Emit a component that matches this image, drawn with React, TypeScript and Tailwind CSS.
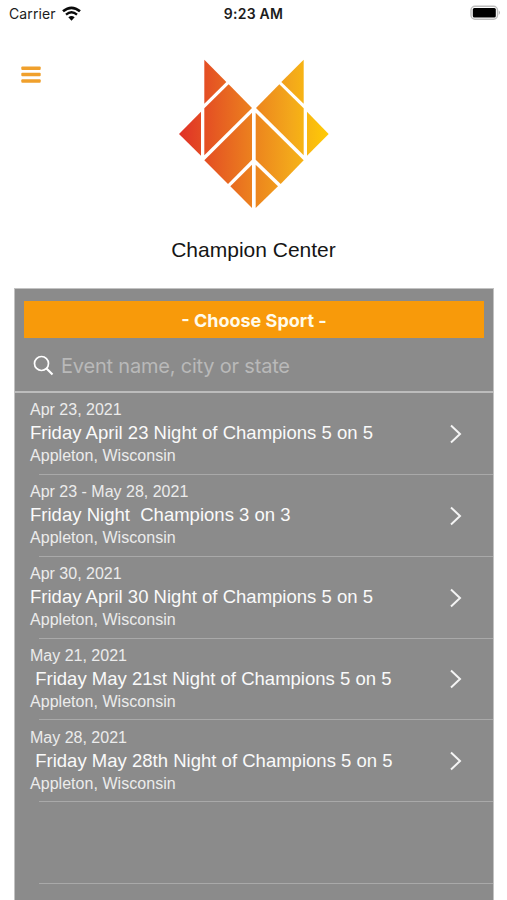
const events = [
  { date: "Apr 23, 2021", name: "Friday April 23 Night of Champions 5 on 5", place: "Appleton, Wisconsin" },
  { date: "Apr 23 - May 28, 2021", name: "Friday Night  Champions 3 on 3", place: "Appleton, Wisconsin" },
  { date: "Apr 30, 2021", name: "Friday April 30 Night of Champions 5 on 5", place: "Appleton, Wisconsin" },
  { date: "May 21, 2021", name: " Friday May 21st Night of Champions 5 on 5", place: "Appleton, Wisconsin" },
  { date: "May 28, 2021", name: " Friday May 28th Night of Champions 5 on 5", place: "Appleton, Wisconsin" },
];

function StatusBar() {
  return (
    <div className="grid h-7 grid-cols-3 items-center pb-[2px] pl-[9px] pr-[6px] font-[Inter,sans-serif] text-[14px] text-[#1c1c1c]">
      <div className="flex items-center gap-[6px]">
        <span className="tracking-[0.1px]">Carrier</span>
        <svg className="h-[15px] w-[19px]" viewBox="0 0 57 45" fill="none" stroke="#0a0a0a">
          <path d="M3 16 Q28.500 -5 54 16" strokeWidth="8" />
          <path d="M12 26 Q28.500 12 45 26" strokeWidth="7" />
          <path d="M28.500 44 L19 34 Q28.500 26 38 34 Z" fill="#0a0a0a" stroke="none" />
        </svg>
      </div>
      <div className="-ml-[3px] whitespace-nowrap text-center font-semibold tracking-[0.25px]">9:23 AM</div>
      <div className="flex justify-end">
        <svg className="h-[16px] w-[31px]" viewBox="0 0 31 16">
          <rect x="1" y="1.200" width="26.500" height="13" rx="4" fill="#fff" stroke="#bdbdbd" strokeWidth="1.400" />
          <rect x="2.800" y="3" width="23" height="9.600" rx="1.500" fill="#000" />
          <path d="M28.800 5.500 Q31 7.700 28.800 10 Z" fill="#aaa" />
        </svg>
      </div>
    </div>
  );
}

function Logo() {
  return (
    <svg className="h-[170px] w-[170px]" viewBox="0 0 510 510">
      <defs>
        <linearGradient id="fox" gradientUnits="userSpaceOnUse" x1="27" y1="0" x2="476" y2="0">
          <stop offset="0" stopColor="#e03127" />
          <stop offset="0.250" stopColor="#e65b22" />
          <stop offset="0.500" stopColor="#ec831e" />
          <stop offset="0.750" stopColor="#f3a81b" />
          <stop offset="1" stopColor="#ffcb05" />
        </linearGradient>
      </defs>
      <g fill="url(#fox)">
        <path d="M103 29 L169 96 L103 161 Z" />
        <path d="M401 29 V161 L334 96 Z" />
        <path d="M93 185 V317 L27 252 Z" />
        <path d="M411 185 L476 252 L411 317 Z" />
        <path d="M176 103 L246 174 L103 316 V175 Z" />
        <path d="M328 103 L401 175 V316 L258 174 Z" />
        <path d="M246 188 V329 L174 402 L103 331 Z" />
        <path d="M257 188 L401 331 L332 402 L257 329 Z" />
        <path d="M246 344 V474 L181 409 Z" />
        <path d="M257 344 L324 409 L257 474 Z" />
      </g>
    </svg>
  );
}

export default function App() {
  return (
    <div className="flex h-[900px] w-[507px] flex-col overflow-hidden bg-white font-['Liberation_Sans',Arial,sans-serif]">
      <StatusBar />
      <header className="flex h-[260px] shrink-0 items-start pt-[22px]">
        <div className="w-[170px] pl-[21px] pt-[16px]">
          <button aria-label="Menu">
            <svg className="block h-[18px] w-[20px]" viewBox="0 0 20 18" fill="#f0a02c">
              <rect x="0.300" y="0.400" width="19.400" height="3.500" rx="1" />
              <rect x="0.300" y="6.800" width="19.400" height="3.500" rx="1" />
              <rect x="0.300" y="13.200" width="19.400" height="3.500" rx="1" />
            </svg>
          </button>
        </div>
        <div className="flex w-[170px] flex-col items-center">
          <Logo />
          <h1 className="mr-[3px] mt-[16px] whitespace-nowrap text-[21px] leading-[28px] text-[#151515]">Champion Center</h1>
        </div>
      </header>
      <main className="ml-[14px] flex w-[480px] flex-1 flex-col border border-b-0 border-[#c2c2c2] bg-[#8b8b8b]">
        <div className="px-[9px] pt-[12px]">
          <button className="flex h-[37px] w-full items-center justify-center bg-[#f89a0a] pt-[2px] font-[Inter,sans-serif] text-[18px] font-bold text-[#fffbea]">
            - Choose Sport -
          </button>
        </div>
        <div className="flex h-[55px] shrink-0 items-center gap-[7px] border-b-2 border-[#bcbcbc] pl-[18px] pt-[1px]">
          <svg className="h-[21px] w-[21px]" viewBox="0 0 21 21" fill="none" stroke="#fff" strokeWidth="1.700">
            <circle cx="8.500" cy="8.500" r="7" />
            <path d="M13.500 13.500 L19.500 19.500" strokeWidth="2.100" />
          </svg>
          <span className="pt-[1px] font-[Inter,sans-serif] text-[20px] tracking-[-0.2px] text-[#b9b9b9]">Event name, city or state</span>
        </div>
        <ul>
          {events.map((e) => (
            <li key={e.name} className="flex h-[81.850px] flex-col">
              <div className="flex flex-1 items-center justify-between pl-[15px] pr-[31px]">
                <div className="whitespace-pre pb-[1.500px] text-[16px] text-[#ececec]">
                  <div className="leading-[22px]">{e.date}</div>
                  <div className="text-[18.500px] leading-[24px] tracking-[0.015px] text-[#fafafa]">{e.name}</div>
                  <div className="leading-[21px] tracking-[0.04px]">{e.place}</div>
                </div>
                <svg className="mt-px h-[20px] w-[12px]" viewBox="0 0 12 20" fill="none" stroke="#f4f4f4" strokeWidth="2">
                  <path d="M1 1.500 L10 10 L1 18.500" />
                </svg>
              </div>
              <div className="ml-6 h-px bg-[#a9a9a9]" />
            </li>
          ))}
          <li className="flex h-[81.850px] flex-col justify-end">
            <div className="ml-6 h-px bg-[#a9a9a9]" />
          </li>
        </ul>
      </main>
    </div>
  );
}
